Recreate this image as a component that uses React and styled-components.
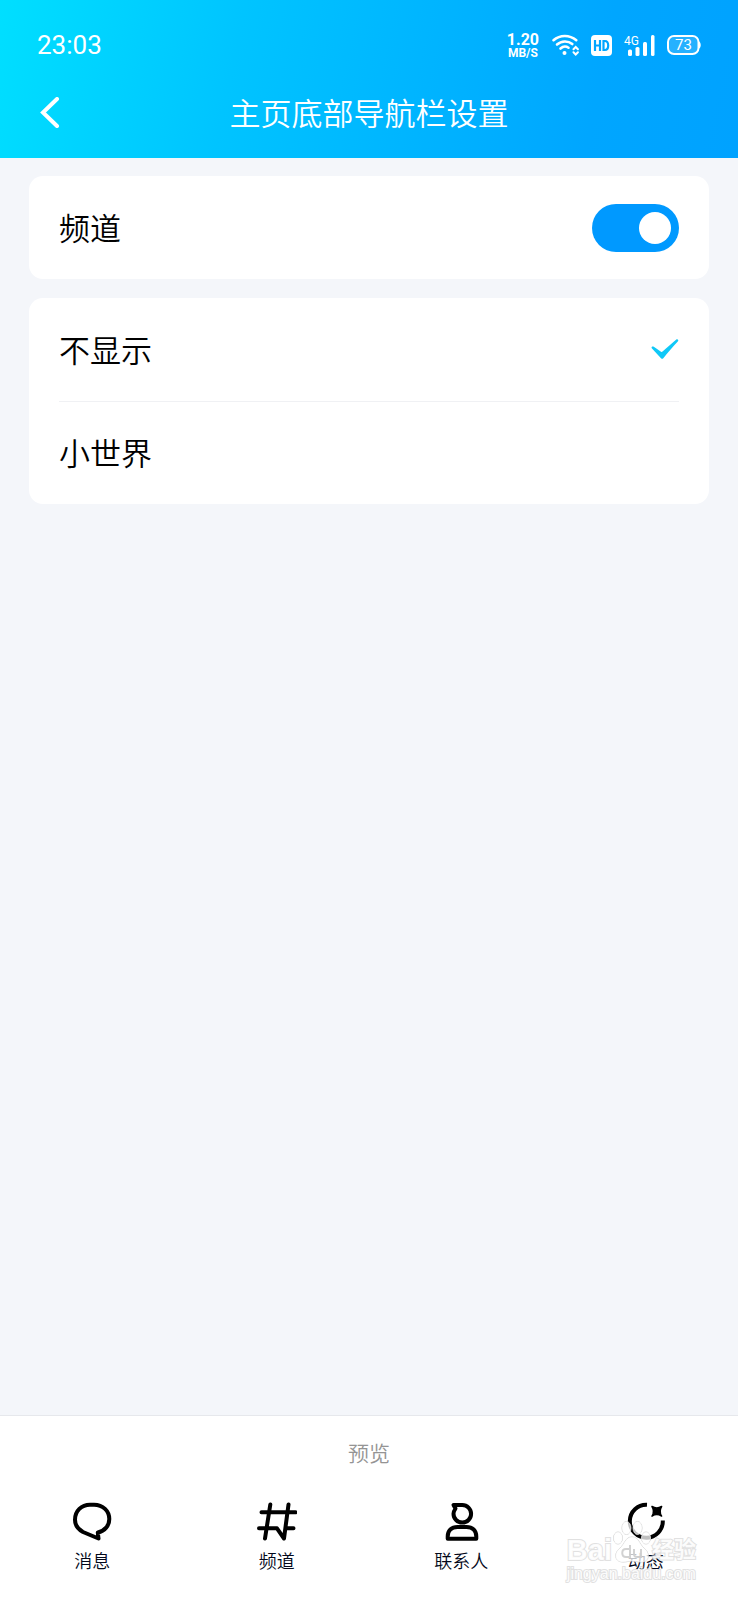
import React, { useState } from "react";
import styled, { createGlobalStyle } from "styled-components";

const GlobalStyle = createGlobalStyle`
  *, *::before, *::after { box-sizing: border-box; }
  body {
    margin: 0;
    background: #f4f6fa;
    color: #03081a;
    font-family: "Noto Sans", "Noto Sans CJK SC", sans-serif;
    font-weight: 350;
  }
`;

const Page = styled.div`
  display: flex;
  flex-direction: column;
  min-height: 100vh;
`;

const Header = styled.header`
  background: linear-gradient(102deg, #00dfff 0%, #00c4ff 32%, #00a6ff 80%, #00a2ff 100%);
  color: #fff;
`;

const StatusBar = styled.div`
  display: flex;
  align-items: center;
  justify-content: space-between;
  height: 68px;
  padding: 22px 37px 0;
  font-family: Roboto, sans-serif;
  font-weight: 400;
`;

const Clock = styled.time`
  font-size: 26px;
  line-height: 32px;
`;

const StatusIcons = styled.div`
  display: flex;
  align-items: center;
  gap: 12px;

  svg { display: block; }
`;

const NetSpeed = styled.div`
  display: flex;
  flex-direction: column;
  align-items: center;
  padding-top: 2px;
  font-weight: 700;
`;

const SpeedValue = styled.span`
  font-size: 16px;
  line-height: 14px;
`;

const SpeedUnit = styled.span`
  font-size: 12px;
  line-height: 12px;
`;

const TitleBar = styled.div`
  display: grid;
  grid-template-columns: 60px 1fr 60px;
  align-items: center;
  height: 90px;
  padding: 0 20px;
`;

const BackButton = styled.button`
  display: flex;
  align-items: center;
  justify-content: center;
  width: 60px;
  height: 60px;
  padding: 0;
  border: 0;
  background: none;
  color: inherit;
  cursor: pointer;
`;

const Title = styled.h1`
  margin: 0;
  font-size: 31px;
  line-height: 40px;
  font-weight: inherit;
  text-align: center;
`;

const Content = styled.main`
  flex: 1;
  display: flex;
  flex-direction: column;
  gap: 19px;
  padding: 18px 29px;
`;

const Card = styled.section`
  padding: 0 30px;
  border-radius: 14px;
  background: #fff;
`;

const Row = styled.label`
  display: flex;
  align-items: center;
  justify-content: space-between;
  height: 103px;
  font-size: 31px;
  line-height: 40px;
  color: #000;
  cursor: pointer;

  & + & { border-top: 1px solid #f0f1f4; }
`;

const Toggle = styled.input`
  appearance: none;
  display: flex;
  align-items: center;
  width: 87px;
  height: 48px;
  margin: 0;
  padding: 0 8px;
  border-radius: 24px;
  background: #d5d8de;
  cursor: pointer;

  &::before {
    content: "";
    width: 32px;
    height: 32px;
    border-radius: 50%;
    background: #fff;
  }

  &:checked {
    justify-content: flex-end;
    background: #0099ff;
  }
`;

const Choice = styled.span`
  display: grid;
  width: 28px;
  height: 28px;

  > * { grid-area: 1 / 1; }
`;

const Radio = styled.input`
  appearance: none;
  width: 28px;
  height: 28px;
  margin: 0;
  cursor: pointer;

  & + svg { visibility: hidden; pointer-events: none; }
  &:checked + svg { visibility: visible; }
`;

const Preview = styled.footer`
  position: relative;
  padding: 22px 0 27px;
  border-top: 1px solid #e6e8ec;
  background: #fff;
`;

const PreviewTitle = styled.h2`
  margin: 0 0 33px;
  font-size: 21px;
  line-height: 30px;
  font-weight: inherit;
  text-align: center;
  color: #949494;
`;

const Tabs = styled.nav`
  display: grid;
  grid-template-columns: repeat(4, 1fr);
`;

const Tab = styled.button`
  display: flex;
  flex-direction: column;
  align-items: center;
  gap: 8px;
  padding: 0;
  border: 0;
  background: none;
  color: #03081a;
  font-family: inherit;
  font-weight: inherit;
  font-size: 18px;
  line-height: 24px;
  cursor: pointer;
`;

const TabIcon = styled.svg`
  display: block;
  width: 40px;
  height: 40px;
  fill: none;
  stroke: #000;
  stroke-width: 4px;
  stroke-linecap: round;
  stroke-linejoin: round;
`;

const Watermark = styled.div`
  position: absolute;
  right: 42px;
  bottom: 16px;
  color: rgba(255, 255, 255, 0.9);
  font-family: "Liberation Sans", "Noto Sans CJK SC", sans-serif;
  font-weight: 700;
  -webkit-text-stroke: 2px rgba(205, 205, 205, 0.6);
  paint-order: stroke fill;
  pointer-events: none;
`;

const WatermarkBrand = styled.div`
  display: flex;
  align-items: flex-end;
  height: 44px;
  font-size: 29px;
  line-height: 28px;
`;

const WatermarkName = styled.span`
  font-size: 22px;
`;

const WatermarkUrl = styled.div`
  font-size: 16px;
  line-height: 20px;
  font-weight: 400;
`;

const WifiIcon = () => (
  <svg width="28" height="22" viewBox="0 0 28 22" fill="none" stroke="#fff" strokeWidth="2.6" strokeLinecap="round" aria-hidden="true">
    <path d="M2.500 6.2C9 0.500 18.500 0.500 25.300 6.200" />
    <path d="M6 10.500C10.500 6.500 17 6.500 21.300 10" />
    <path d="M9.500 14.500C12 12.200 15.300 12.200 17.500 13.700" />
    <circle cx="13.500" cy="19" r="2" fill="#fff" stroke="none" />
    <path d="M22.500 15.300L24.700 13L26.900 15.300M22.500 18.300L24.700 20.500L26.900 18.300" strokeWidth="2" />
  </svg>
);

const HdIcon = () => (
  <svg width="21" height="21" viewBox="0 0 21 21" aria-hidden="true">
    <rect width="21" height="21" rx="4" fill="#fff" />
    <g fill="none" stroke="#00a5ff" strokeWidth="2.200">
      <path d="M4 5V16M9 5V16M4 10.500H9" />
      <path d="M12.500 6V15H13.800C16 15 17.200 13.500 17.200 10.500C17.200 7.500 16 6 13.800 6Z" />
    </g>
  </svg>
);

const SignalIcon = () => (
  <svg width="31" height="22" viewBox="0 0 31 22" fill="#fff" aria-hidden="true">
    <text x="0" y="11" fontFamily="Roboto, sans-serif" fontSize="12">4G</text>
    <rect x="4" y="15.500" width="4" height="6.500" rx="1.500" />
    <rect x="11.500" y="13" width="4" height="9" rx="1.500" />
    <rect x="19" y="8" width="4" height="14" rx="1.500" />
    <rect x="27" y="1" width="3.500" height="21" rx="1.500" />
  </svg>
);

const BatteryIcon = () => (
  <svg width="34" height="20" viewBox="0 0 34 20" aria-hidden="true">
    <rect x="1" y="1" width="30.500" height="18" rx="6" fill="#fff" fillOpacity="0.15" stroke="#fff" strokeWidth="2" />
    <path d="M32 6.500C34.300 7.500 34.300 12.500 32 13.500Z" fill="#fff" />
    <text x="16.500" y="15" textAnchor="middle" fontFamily="Roboto, sans-serif" fontSize="15" fill="#fff">73</text>
  </svg>
);

const CheckIcon = () => (
  <svg width="28" height="28" viewBox="0 0 28 28" aria-hidden="true">
    <path d="M1.200 10.600C0.400 11.100 0.400 11.900 1 12.600L10 22.200C10.800 23 11.500 23 12.300 22.200C17 16.500 21 11.500 27 5.200C28 4 26.500 2.600 25.300 3.500L11.500 15.600C11 16 10.500 16 10 15.700L2.800 10.800C2.200 10.400 1.700 10.300 1.200 10.600Z" fill="#0fc8f7" />
  </svg>
);

const tabs = [
  {
    label: "消息",
    icon: <path d="M26.500 37.500L11 31C5.500 28 3 24 3 18.700C3 10 9.500 3.700 18 3.700H22C31 3.700 37.300 10 37.300 18C37.300 24.500 32.800 30 25.800 31.500Z" />,
  },
  {
    label: "频道",
    icon: <path d="M13.300 3.500L8 37.500M4.500 11.300H38.500M2 27.300H20L27 37.500L31.500 3.500M29 27.300H36.500" />,
  },
  {
    label: "联系人",
    icon: (
      <>
        <path d="M12.500 4H21.300A8.800 8.800 0 1 1 12.500 12.800C12.500 10.500 13.500 9 14.500 7.500Z" />
        <path d="M6.700 37.700V35.500C6.700 29.500 10.500 26 16.500 26H25.500C31.500 26 35.300 29.500 35.300 35.500V37.700Z" />
      </>
    ),
  },
  {
    label: "动态",
    icon: (
      <>
        <path d="M21 3.700A16.500 16.500 0 1 0 36.800 19.500" strokeLinecap="butt" />
        <path d="M26 5.500Q30.800 8.500 35.600 5.500Q32.600 10.300 35.600 15.100Q30.800 12.100 26 15.100Q29 10.300 26 5.500Z" fill="#000" strokeWidth="1.500" />
      </>
    ),
  },
];

const PawIcon = () => (
  <svg width="40" height="44" viewBox="0 0 40 44" fill="rgba(255,255,255,0.75)" stroke="rgba(205,205,205,0.9)" aria-hidden="true">
    <ellipse cx="6" cy="18" rx="4.500" ry="6" />
    <ellipse cx="14.500" cy="8" rx="4.500" ry="6.500" />
    <ellipse cx="25.500" cy="8" rx="4.500" ry="6.500" />
    <ellipse cx="34" cy="18" rx="4.500" ry="6" />
    <path d="M20 17C13 17 13 24 8 28C1 34 3 42 11 42C15 42 17 41 20 41C23 41 25 42 29 42C37 42 39 34 32 28C27 24 27 17 20 17Z" />
    <path d="M18 25V37H14C9 37 9 29 14 29H18M22 29V34C22 36 23 37 25 37H29V29" fill="none" strokeWidth="2" />
  </svg>
);

export default function App() {
  const [channel, setChannel] = useState(true);
  const [choice, setChoice] = useState("不显示");

  return (
    <>
      <GlobalStyle />
      <Page>
        <Header>
          <StatusBar>
            <Clock>23:03</Clock>
            <StatusIcons>
              <NetSpeed>
                <SpeedValue>1.20</SpeedValue>
                <SpeedUnit>MB/S</SpeedUnit>
              </NetSpeed>
              <WifiIcon />
              <HdIcon />
              <SignalIcon />
              <BatteryIcon />
            </StatusIcons>
          </StatusBar>
          <TitleBar>
            <BackButton type="button" aria-label="返回">
              <svg width="20" height="32" viewBox="0 0 20 32" fill="none" stroke="#fff" strokeWidth="4" strokeLinecap="round" strokeLinejoin="miter" aria-hidden="true">
                <path d="M17 2L3 15.500L17 29" />
              </svg>
            </BackButton>
            <Title>主页底部导航栏设置</Title>
          </TitleBar>
        </Header>

        <Content>
          <Card>
            <Row>
              频道
              <Toggle type="checkbox" role="switch" checked={channel} onChange={(e) => setChannel(e.target.checked)} />
            </Row>
          </Card>
          <Card role="radiogroup">
            {["不显示", "小世界"].map((name) => (
              <Row key={name}>
                {name}
                <Choice>
                  <Radio type="radio" name="tab" checked={choice === name} onChange={() => setChoice(name)} />
                  <CheckIcon />
                </Choice>
              </Row>
            ))}
          </Card>
        </Content>

        <Preview>
          <PreviewTitle>预览</PreviewTitle>
          <Tabs>
            {tabs.map((tab) => (
              <Tab key={tab.label} type="button">
                <TabIcon viewBox="0 0 40 40" aria-hidden="true">{tab.icon}</TabIcon>
                {tab.label}
              </Tab>
            ))}
          </Tabs>
          <Watermark>
            <WatermarkBrand>
              <span>Bai</span>
              <PawIcon />
              <WatermarkName>经验</WatermarkName>
            </WatermarkBrand>
            <WatermarkUrl>jingyan.baidu.com</WatermarkUrl>
          </Watermark>
        </Preview>
      </Page>
    </>
  );
}
